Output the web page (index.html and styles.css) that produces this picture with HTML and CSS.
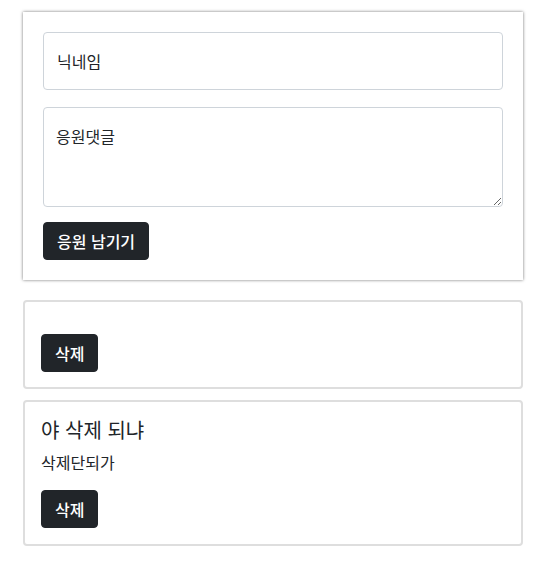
FILE: index.html
```html
<!DOCTYPE html>
<html lang="ko">
<head>
    <meta charset="UTF-8">
    <meta name="viewport" content="width=device-width, initial-scale=1.0">
    <title>응원 댓글</title>
    <link rel="stylesheet" href="styles.css">
</head>
<body>

    <div class="wrap">
        <form class="write-box">
            <input type="text" class="field" placeholder="닉네임">
            <textarea class="field field-area" placeholder="응원댓글"></textarea>
            <button type="button" class="btn-dark">응원 남기기</button>
        </form>

        <div class="comment comment-empty">
            <h5 class="comment-title"></h5>
            <p class="comment-text"></p>
            <button type="button" class="btn-dark">삭제</button>
        </div>

        <div class="comment">
            <h5 class="comment-title">야 삭제 되냐</h5>
            <p class="comment-text">삭제단되가</p>
            <button type="button" class="btn-dark">삭제</button>
        </div>
    </div>

</body>
</html>
```

FILE: styles.css
```css
/* General Styling */
body {
    font-family: "Noto Sans CJK KR", "Noto Sans", sans-serif;
    color: #212529;
    background: #fff;
    margin: 0;
}

.wrap {
    width: 500px;
    padding: 12px 0 0 23px;
}

/* Write Form */
.write-box {
    display: flex;
    flex-direction: column;
    align-items: flex-start;
    padding: 20px 20px 20px 20px;
    margin: 0 0 20px;
    box-shadow: 0 0 3px rgba(0, 0, 0, 0.55);
}

.field {
    width: 100%;
    box-sizing: border-box;
    font-family: inherit;
    font-size: 16px;
    line-height: 24px;
    color: #212529;
    border: 1px solid #ced4da;
    border-radius: 4px;
    padding: 16px 13px;
    margin: 0 0 17px;
    outline: none;
}

.field::placeholder {
    color: #212529;
}

.field-area {
    height: 100px;
    padding: 16px 12px;
    margin-bottom: 15px;
}

.btn-dark {
    font-family: inherit;
    font-size: 16px;
    font-weight: 500;
    line-height: 24px;
    color: #fff;
    background-color: #212529;
    border: 1px solid #212529;
    border-radius: 4px;
    padding: 6px 13px;
    cursor: pointer;
}

/* Comment Cards */
.comment {
    border: 2px solid #dedede;
    border-radius: 4px;
    padding: 16px 16px 16px 16px;
    margin: 0 0 11px;
    width: 500px;
    box-sizing: border-box;
}

.comment-empty {
    padding-bottom: 15px;
}

.comment-title {
    font-size: 20px;
    font-weight: 400;
    line-height: 24px;
    margin: 0 0 8px;
}

.comment-text {
    font-size: 16px;
    line-height: 24px;
    margin: 0 0 16px;
}

.comment-title:empty {
    margin: 0;
}
```
